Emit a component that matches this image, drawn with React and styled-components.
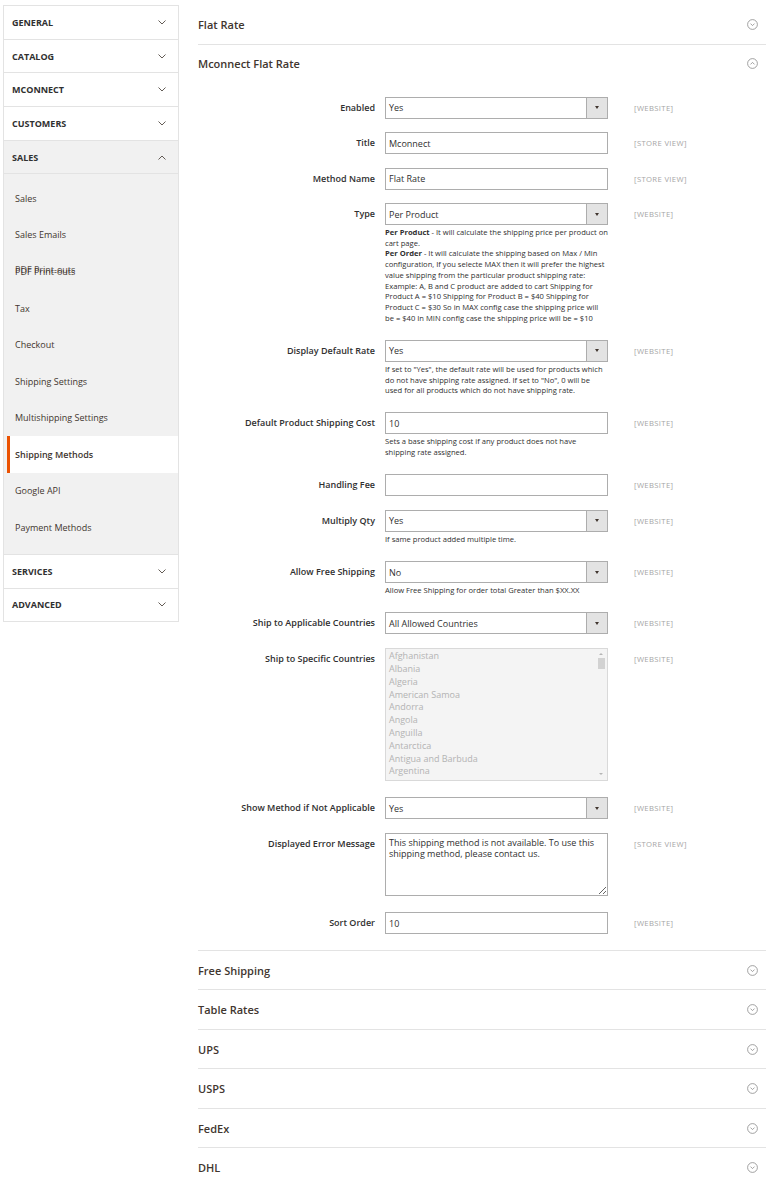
import React from 'react';
import styled, { createGlobalStyle } from 'styled-components';

const Global = createGlobalStyle`
  html, body { margin: 0; padding: 0; background: #fff; }
  body { font-family: "Open Sans", "Liberation Sans", sans-serif; color: #303030; }
  * { box-sizing: border-box; }
`;

const Page = styled.div`
  display: grid;
  grid-template-columns: 176px 568px;
  column-gap: 19px;
  align-items: start;
  padding: 5px 8px 0 3px;
`;

/* ---------- Sidebar ---------- */
const Sidebar = styled.nav`
  border: 1px solid #e3e3e3;
  border-bottom: none;
`;

const NavHeader = styled.div`
  height: 33.7px;
  display: flex;
  align-items: center;
  justify-content: space-between;
  padding: 0 12px 0 8px;
  border-bottom: 1px solid #e3e3e3;
  background: ${p => (p.$open ? '#f1f1f1' : '#fff')};
  font-size: 9px;
  font-weight: 700;
  text-transform: uppercase;
  color: #303030;
`;

const SubList = styled.div`
  background: #f1f1f1;
  padding: 5.5px 0 8px;
  border-bottom: 1px solid #e3e3e3;
`;

const SubItem = styled.div`
  position: relative;
  height: 36.6px;
  display: flex;
  align-items: center;
  font-size: 9px;
  color: #41362f;
  padding-left: ${p => (p.$active ? '5px' : '11px')};
  margin-left: ${p => (p.$active ? '3px' : '0')};
  background: ${p => (p.$active ? '#fff' : 'transparent')};
  border-left: ${p => (p.$active ? '3px solid #eb5202' : 'none')};
  font-weight: ${p => (p.$active ? 600 : 400)};
`;

const Ghost = styled.span`
  position: absolute;
  left: 11px;
  top: calc(50% - 8.5px);
  font-size: 9px;
  color: #41362f;
  opacity: 0.85;
`;

const Chevron = ({ up }) => (
  <svg width="8" height="5" viewBox="0 0 8 5">
    <polyline
      points={up ? '0.5,4.5 4,1 7.5,4.5' : '0.5,0.5 4,4 7.5,0.5'}
      fill="none"
      stroke="#514943"
      strokeWidth="0.9"
    />
  </svg>
);

/* ---------- Main ---------- */
const Main = styled.main`
  display: flex;
  flex-direction: column;
`;

const Section = styled.section`
  border-bottom: ${p => (p.$last ? 'none' : '1px solid #e3e3e3')};
`;

const SectionHeader = styled.div`
  height: 38.5px;
  display: flex;
  align-items: center;
  justify-content: space-between;
  padding-right: 8px;
  font-size: 11px;
  font-weight: 600;
  color: #41362f;
`;

const CircleIcon = ({ up }) => (
  <svg width="11" height="11" viewBox="0 0 11 11">
    <circle cx="5.5" cy="5.5" r="4.9" fill="none" stroke="#8a8a8a" strokeWidth="0.8" />
    <polyline
      points={up ? '3.5,6.4 5.5,4.4 7.5,6.4' : '3.5,4.6 5.5,6.6 7.5,4.6'}
      fill="none"
      stroke="#8a8a8a"
      strokeWidth="0.8"
    />
  </svg>
);

const Form = styled.div`
  display: flex;
  flex-direction: column;
  gap: 13.5px;
  padding: 13.5px 0 15.5px;
`;

const Row = styled.div`
  display: grid;
  grid-template-columns: 177px 223px auto;
  column-gap: 10px;
  align-items: start;
`;

const Label = styled.div`
  text-align: right;
  font-size: 9px;
  font-weight: 600;
  line-height: 22px;
  color: #303030;
  white-space: nowrap;
`;

const Control = styled.div`
  display: flex;
  flex-direction: column;
`;

const Scope = styled.div`
  margin-left: 16px;
  font-size: 7.7px;
  letter-spacing: 0.35px;
  line-height: 22px;
  color: #a6a6a6;
  text-transform: uppercase;
`;

const TextInput = styled.input`
  height: 22px;
  width: 223px;
  border: 1px solid #adadad;
  padding: 0 3px;
  font-family: inherit;
  font-size: 9px;
  color: #303030;
  outline: none;
  background: #fff;
`;

const SelectBox = styled.div`
  height: 22px;
  display: flex;
  border: 1px solid #adadad;
  background: #fff;
`;

const SelectValue = styled.span`
  flex: 1;
  display: flex;
  align-items: center;
  padding-left: 3px;
  font-size: 9px;
  color: #303030;
`;

const ArrowBox = styled.span`
  width: 21px;
  display: flex;
  align-items: center;
  justify-content: center;
  background: #e3e3e3;
  border-left: 1px solid #adadad;
  &::after {
    content: '';
    border-left: 2.5px solid transparent;
    border-right: 2.5px solid transparent;
    border-top: 3px solid #41362f;
  }
`;

const Note = styled.div`
  margin: 2px 0 3px;
  font-size: 7.6px;
  line-height: 10.7px;
  color: #303030;
  b { font-weight: 700; }
`;

const MultiSelect = styled.div`
  height: 133px;
  display: flex;
  border: 1px solid #d9d9d9;
  background: #f4f4f4;
  margin-bottom: 3px;
  overflow: hidden;
`;

const OptionList = styled.div`
  flex: 1;
  padding: 1.5px 3px;
`;

const Option = styled.div`
  font-size: 9px;
  line-height: 12.8px;
  color: #b3b3b3;
  white-space: nowrap;
`;

const ScrollBar = styled.div`
  width: 10px;
  margin-right: 1px;
  display: flex;
  flex-direction: column;
  align-items: center;
  padding: 4px 0 5px;
`;

const ScrollArrow = styled.span`
  width: 0;
  height: 0;
  border-left: 2px solid transparent;
  border-right: 2px solid transparent;
  ${p => (p.$up ? 'border-bottom: 2px solid #b5b5b5;' : 'border-top: 2px solid #b5b5b5;')}
`;

const Thumb = styled.span`
  margin-top: 3px;
  width: 7px;
  height: 11px;
  background: #d2d2d2;
`;

const Spacer = styled.span`
  flex: 1;
`;

const TextArea = styled.textarea`
  height: 63px;
  width: 223px;
  border: 1px solid #adadad;
  padding: 3px;
  font-family: inherit;
  font-size: 9px;
  line-height: 11px;
  color: #303030;
  resize: vertical;
  outline: none;
  margin: 0 0 3px;
  display: block;
`;

const Select = ({ value }) => (
  <SelectBox>
    <SelectValue>{value}</SelectValue>
    <ArrowBox />
  </SelectBox>
);

const countries = [
  'Afghanistan', 'Albania', 'Algeria', 'American Samoa', 'Andorra',
  'Angola', 'Anguilla', 'Antarctica', 'Antigua and Barbuda', 'Argentina',
];

const navTop = ['General', 'Catalog', 'Mconnect', 'Customers'];
const salesItems = [
  'Sales', 'Sales Emails', 'PDF Print-outs', 'Tax', 'Checkout',
  'Shipping Settings', 'Multishipping Settings', 'Shipping Methods',
  'Google API', 'Payment Methods',
];
const bottomSections = ['Free Shipping', 'Table Rates', 'UPS', 'USPS', 'FedEx', 'DHL'];

const FieldRow = ({ label, scope, children }) => (
  <Row>
    <Label>{label}</Label>
    <Control>{children}</Control>
    <Scope>[{scope}]</Scope>
  </Row>
);

export default function App() {
  return (
    <>
      <Global />
      <Page>
        <Sidebar>
          {navTop.map(n => (
            <NavHeader key={n}>
              {n}
              <Chevron />
            </NavHeader>
          ))}
          <NavHeader $open>
            Sales
            <Chevron up />
          </NavHeader>
          <SubList>
            {salesItems.map(s => (
              <SubItem key={s} $active={s === 'Shipping Methods'}>
                {s === 'PDF Print-outs' && <Ghost aria-hidden="true">{s}</Ghost>}
                {s}
              </SubItem>
            ))}
          </SubList>
          <NavHeader>
            Services
            <Chevron />
          </NavHeader>
          <NavHeader>
            Advanced
            <Chevron />
          </NavHeader>
        </Sidebar>

        <Main>
          <Section>
            <SectionHeader>
              Flat Rate
              <CircleIcon />
            </SectionHeader>
          </Section>

          <Section>
            <SectionHeader>
              Mconnect Flat Rate
              <CircleIcon up />
            </SectionHeader>
            <Form>
              <FieldRow label="Enabled" scope="Website">
                <Select value="Yes" />
              </FieldRow>
              <FieldRow label="Title" scope="Store View">
                <TextInput readOnly value="Mconnect" />
              </FieldRow>
              <FieldRow label="Method Name" scope="Store View">
                <TextInput readOnly value="Flat Rate" />
              </FieldRow>
              <FieldRow label="Type" scope="Website">
                <Select value="Per Product" />
                <Note>
                  <b>Per Product</b> - It will calculate the shipping price per product on cart page.
                  <br />
                  <b>Per Order</b> - It will calculate the shipping based on Max / Min configuration, If you
                  selecte MAX then it will prefer the highest value shipping from the particular product
                  shipping rate: Example: A, B and C product are added to cart Shipping for Product A = $10
                  Shipping for Product B = $40 Shipping for Product C = $30 So in MAX config case the
                  shipping price will be = $40 In MIN config case the shipping price will be = $10
                </Note>
              </FieldRow>
              <FieldRow label="Display Default Rate" scope="Website">
                <Select value="Yes" />
                <Note>
                  If set to "Yes", the default rate will be used for products which do not have shipping
                  rate assigned. If set to "No", 0 will be used for all products which do not have
                  shipping rate.
                </Note>
              </FieldRow>
              <FieldRow label="Default Product Shipping Cost" scope="Website">
                <TextInput readOnly value="10" />
                <Note>Sets a base shipping cost if any product does not have shipping rate assigned.</Note>
              </FieldRow>
              <FieldRow label="Handling Fee" scope="Website">
                <TextInput readOnly value="" />
              </FieldRow>
              <FieldRow label="Multiply Qty" scope="Website">
                <Select value="Yes" />
                <Note>If same product added multiple time.</Note>
              </FieldRow>
              <FieldRow label="Allow Free Shipping" scope="Website">
                <Select value="No" />
                <Note>Allow Free Shipping for order total Greater than $XX.XX</Note>
              </FieldRow>
              <FieldRow label="Ship to Applicable Countries" scope="Website">
                <Select value="All Allowed Countries" />
              </FieldRow>
              <FieldRow label="Ship to Specific Countries" scope="Website">
                <MultiSelect>
                  <OptionList>
                    {countries.map(c => (
                      <Option key={c}>{c}</Option>
                    ))}
                  </OptionList>
                  <ScrollBar>
                    <ScrollArrow $up />
                    <Thumb />
                    <Spacer />
                    <ScrollArrow />
                  </ScrollBar>
                </MultiSelect>
              </FieldRow>
              <FieldRow label="Show Method if Not Applicable" scope="Website">
                <Select value="Yes" />
              </FieldRow>
              <FieldRow label="Displayed Error Message" scope="Store View">
                <TextArea
                  readOnly
                  value="This shipping method is not available. To use this shipping method, please contact us."
                />
              </FieldRow>
              <FieldRow label="Sort Order" scope="Website">
                <TextInput readOnly value="10" />
              </FieldRow>
            </Form>
          </Section>

          {bottomSections.map((s, i) => (
            <Section key={s} $last={i === bottomSections.length - 1}>
              <SectionHeader>
                {s}
                <CircleIcon />
              </SectionHeader>
            </Section>
          ))}
        </Main>
      </Page>
    </>
  );
}
